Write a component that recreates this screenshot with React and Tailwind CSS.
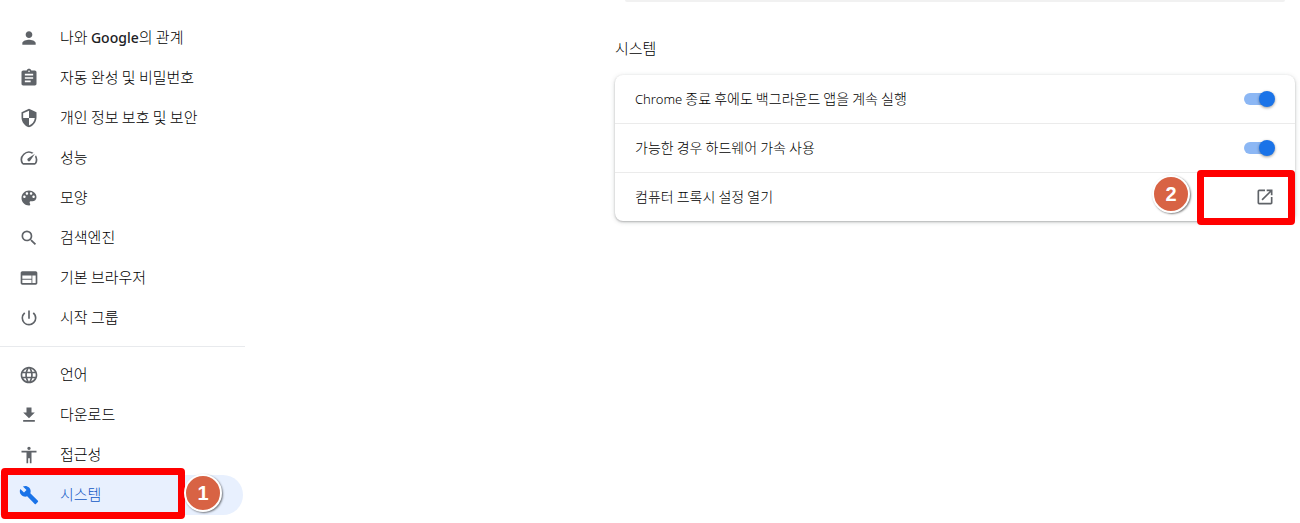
import React from "react";
import {
  MdPerson, MdAssignment, MdSecurity, MdSearch, MdWeb,
  MdPowerSettingsNew, MdLanguage, MdFileDownload, MdAccessibility, MdBuild, MdOpenInNew, MdOutlineSpeed,
} from "react-icons/md";

function PaletteIcon({ className }) {
  return (
    <svg viewBox="0 0 24 24" fill="currentColor" className={className} aria-hidden="true">
      <path d="M12 3c-4.97 0-9 4.03-9 9s4.03 9 9 9c.83 0 1.5-.67 1.5-1.5 0-.39-.15-.74-.39-1.01-.23-.26-.38-.61-.38-.99 0-.83.67-1.5 1.5-1.5H16c2.76 0 5-2.24 5-5 0-4.42-4.03-8-9-8zm-5.5 9c-.83 0-1.5-.67-1.5-1.5S5.67 9 6.5 9 8 9.67 8 10.5 7.33 12 6.5 12zm3-4C8.67 8 8 7.33 8 6.5S8.67 5 9.5 5s1.5.67 1.5 1.5S10.33 8 9.5 8zm5 0c-.83 0-1.5-.67-1.5-1.5S13.67 5 14.5 5s1.5.67 1.5 1.5S15.33 8 14.5 8zm3 4c-.83 0-1.5-.67-1.5-1.5S16.67 9 17.5 9s1.5.67 1.5 1.5-.67 1.5-1.5 1.5z" />
    </svg>
  );
}

const primaryItems = [
  { label: <>나와 <span className="font-['Noto_Sans'] text-sm font-medium text-[#202124]">Google</span>의 관계</>, Icon: MdPerson },
  { label: "자동 완성 및 비밀번호", Icon: MdAssignment },
  { label: "개인 정보 보호 및 보안", Icon: MdSecurity },
  { label: "성능", Icon: MdOutlineSpeed },
  { label: "모양", Icon: PaletteIcon },
  { label: "검색엔진", Icon: MdSearch },
  { label: "기본 브라우저", Icon: MdWeb },
  { label: "시작 그룹", Icon: MdPowerSettingsNew },
];

const secondaryItems = [
  { label: "언어", Icon: MdLanguage },
  { label: "다운로드", Icon: MdFileDownload },
  { label: "접근성", Icon: MdAccessibility },
  { label: "시스템", Icon: MdBuild, current: true },
];

function NavItem({ label, Icon, current }) {
  return (
    <li className="relative">
      <a
        href="#"
        aria-current={current ? "page" : undefined}
        className={
          current
            ? "mr-0.5 flex h-10 items-center gap-[21px] rounded-r-full bg-[#e8f0fe] pb-px pl-[19px] text-[15px] font-light text-[#1258c4]"
            : "mr-0.5 flex h-10 items-center gap-[21px] pb-px pl-[19px] text-[15px] font-light text-black"
        }
      >
        <Icon className={current ? "size-5 text-[#1a73e8]" : "size-5 text-[#5f6368]"} />
        <span>{label}</span>
      </a>
      {current && (
        <>
          <span className="pointer-events-none absolute -top-[7px] left-px h-[51px] w-[184px] rounded-sm border-7 border-[#ff0000]" />
          <Badge className="absolute -top-px left-[184px]">1</Badge>
        </>
      )}
    </li>
  );
}

function Badge({ className, children }) {
  return (
    <span
      className={`${className} flex size-[38px] items-center justify-center rounded-full border-2 border-white bg-[#d86344] font-['Liberation_Sans'] text-xl font-bold text-white shadow-[1px_1px_2px_rgba(0,0,0,0.5)]`}
    >
      {children}
    </span>
  );
}

function ToggleRow({ children }) {
  return (
    <label className="flex h-[49px] items-center justify-between border-b border-[#ebebeb] px-5">
      <span className="pb-0.5">{children}</span>
      <span className="relative flex h-4 w-[31px] items-center">
        <input type="checkbox" role="switch" defaultChecked className="peer absolute inset-0 appearance-none" />
        <span className="h-3 w-7 rounded-full bg-[#bdc1c6] peer-checked:bg-[#8cb7f4]" />
        <span className="pointer-events-none absolute left-0 size-4 rounded-full bg-white shadow-[0_1px_3px_rgba(0,0,0,0.4)] peer-checked:left-[15px] peer-checked:bg-[#1a73e8]" />
      </span>
    </label>
  );
}

export default function App() {
  return (
    <div className="flex min-h-screen justify-between gap-8 overflow-hidden bg-white font-['Noto_Sans_CJK_KR',sans-serif] text-black">
      <nav className="w-[245px] shrink-0 pt-[18px]">
        <ul>
          {primaryItems.map((item, i) => <NavItem key={i} {...item} />)}
        </ul>
        <hr className="mt-2 mb-2 border-[#e8eaed]" />
        <ul>
          {secondaryItems.map((item, i) => <NavItem key={i} {...item} />)}
        </ul>
      </nav>
      <main className="mr-[5px] w-full max-w-[680px]">
        <div className="mx-2.5 h-0.5 rounded-b-xl bg-[#f1f1f1]" />
        <h2 className="pt-[34px] pb-[15px] text-[15px] leading-6 font-light">시스템</h2>
        <section className="rounded-lg bg-white text-sm font-light shadow-[0_1px_2px_rgba(60,64,67,0.3),0_1px_5px_rgba(60,64,67,0.2)]">
          <ToggleRow><span className="font-['Noto_Sans'] text-[13px]">Chrome</span> 종료 후에도 백그라운드 앱을 계속 실행</ToggleRow>
          <ToggleRow>가능한 경우 하드웨어 가속 사용</ToggleRow>
          <div className="relative">
            <button type="button" className="flex h-12 w-full items-center justify-between px-5">
              <span className="pb-0.5">컴퓨터 프록시 설정 열기</span>
              <MdOpenInNew className="size-5 text-[#5f6368]" />
            </button>
            <Badge className="absolute top-0.5 right-[105px]">2</Badge>
            <span className="pointer-events-none absolute -top-[3px] right-0 h-[55px] w-[98px] rounded-sm border-7 border-[#ff0000]" />
          </div>
        </section>
      </main>
    </div>
  );
}
